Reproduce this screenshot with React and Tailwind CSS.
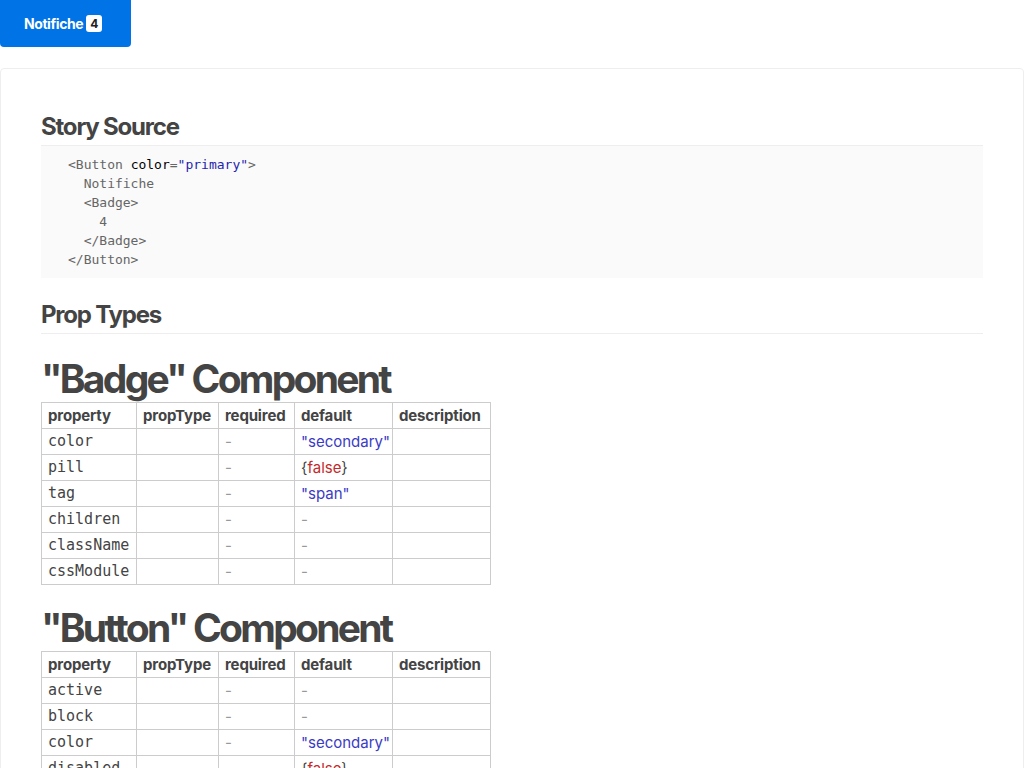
import React from 'react';

const sans = { fontFamily: 'Inter, "Liberation Sans", sans-serif' };
const mono = { fontFamily: '"DejaVu Sans Mono", "Liberation Mono", monospace' };

// ─── Table data ─────────────────────────────────────────────
const badgeProps = [
  { name: 'color', def: { kind: 'str', v: '"secondary"' } },
  { name: 'pill', def: { kind: 'bool', v: 'false' } },
  { name: 'tag', def: { kind: 'str', v: '"span"' } },
  { name: 'children', def: null },
  { name: 'className', def: null },
  { name: 'cssModule', def: null },
];

const buttonProps = [
  { name: 'active', def: null },
  { name: 'block', def: null },
  { name: 'color', def: { kind: 'str', v: '"secondary"' } },
  { name: 'disabled', def: { kind: 'bool', v: 'false' } },
];

function DefaultValue({ def }) {
  if (!def) return <span className="text-[#999]">-</span>;
  if (def.kind === 'str') return <span className="text-[#3b3bc4]">{def.v}</span>;
  return (
    <span className="text-[#444]">
      {'{'}
      <span className="text-[#c42a2a]">{def.v}</span>
      {'}'}
    </span>
  );
}

function PropTable({ rows }) {
  const th = 'border border-[#ccc] px-[6px] h-[26px] text-left font-bold text-[15px] tracking-[-0.01em] leading-none whitespace-nowrap';
  const td = 'border border-[#ccc] px-[6px] h-[26px] text-[15px] leading-none whitespace-nowrap';
  return (
    <table className="border-collapse table-fixed w-[449px] text-[#444]" style={sans}>
      <thead>
        <tr>
          <th className={`${th} w-[95px]`}>property</th>
          <th className={`${th} w-[82px]`}>propType</th>
          <th className={`${th} w-[76px]`}>required</th>
          <th className={`${th} w-[98px]`}>default</th>
          <th className={`${th} w-[98px]`}>description</th>
        </tr>
      </thead>
      <tbody>
        {rows.map((r) => (
          <tr key={r.name}>
            <td className={td} style={mono}>{r.name}</td>
            <td className={td}></td>
            <td className={td}><span className="text-[#999]">-</span></td>
            <td className={td}><DefaultValue def={r.def} /></td>
            <td className={td}></td>
          </tr>
        ))}
      </tbody>
    </table>
  );
}

function ComponentHeading({ children, first }) {
  return (
    <h1
      className={`${first ? 'mt-[20px]' : 'mt-[18px]'} h-[48px] leading-[50px] text-[39px] font-bold tracking-[-0.07em] text-[#444]`}
      style={sans}
    >
      {children}
    </h1>
  );
}

export default function App() {
  return (
    <div className="bg-white min-h-screen" style={sans}>
      <button className="flex items-center gap-[3px] h-[47px] w-[131px] pl-[24px] bg-[#0073e6] rounded-b-[4px] text-white text-[14px] font-bold tracking-[-0.03em]">
        Notifiche
        <span className="flex items-center justify-center w-[16px] h-[17px] bg-white rounded-[3px] text-[#222] text-[12px] font-bold">4</span>
      </button>

      <div className="mt-[21px] border border-[#eee] rounded-t-[4px] px-[40px] pt-[39px] pb-[40px]">
        <h2 className="h-[38px] leading-[37px] border-b border-[#eee] text-[24px] font-bold tracking-[-0.05em] text-[#444]">
          Story Source
        </h2>
        <pre className="bg-[#fafafa] pl-[27px] py-[9px] text-[13px] leading-[19px] text-[#666]" style={mono}>
          {'<Button '}<span className="text-black">color</span>=<span className="text-[#2525b0]">"primary"</span>{'>'}
          {'\n  Notifiche\n  <Badge>\n    4\n  </Badge>\n</Button>'}
        </pre>

        <h2 className="mt-[18px] h-[38px] leading-[37px] border-b border-[#eee] text-[24px] font-bold tracking-[-0.05em] text-[#444]">
          Prop Types
        </h2>

        <ComponentHeading first>"Badge" Component</ComponentHeading>
        <PropTable rows={badgeProps} />

        <ComponentHeading>"Button" Component</ComponentHeading>
        <PropTable rows={buttonProps} />
      </div>
    </div>
  );
}
